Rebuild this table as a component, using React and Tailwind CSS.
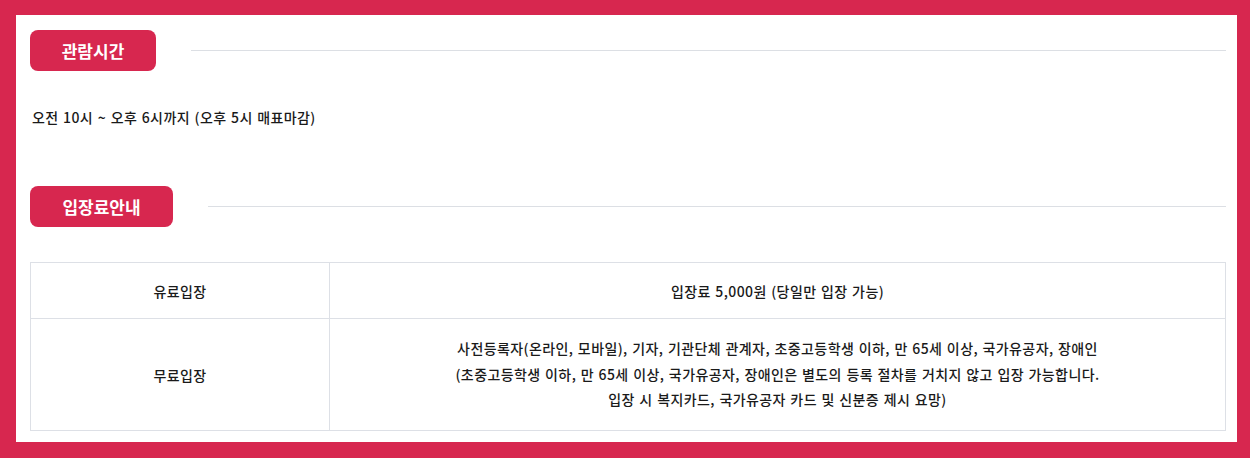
export default function App() {
  const font = { fontFamily: '"Noto Sans CJK KR", "Noto Sans", sans-serif' }
  return (
    <div className="bg-[#d7274f] pt-[15px] pl-4 pr-[13px] pb-4" style={font}>
      <div className="bg-white pt-[15px] pl-[14px] pr-[11px] pb-[10px] h-[427px]">
        {/* 관람시간 */}
        <div className="flex items-center">
          <div className="w-[126px] h-[41px] rounded-lg bg-[#d7274f] text-white text-[17px] font-bold flex items-center justify-center">
            관람시간
          </div>
          <div className="flex-1 ml-[35px] h-px bg-[#dcdfe4]" />
        </div>
        <p className="mt-[36px] ml-[2px] text-sm font-medium text-[#1a1a1a] leading-5 tracking-[0.4px] [word-spacing:1px]">
          오전 10시 ~ 오후 6시까지 (오후 5시 매표마감)
        </p>

        {/* 입장료안내 */}
        <div className="flex items-center mt-[59px]">
          <div className="w-[143px] h-[41px] rounded-lg bg-[#d7274f] text-white text-[17px] font-bold flex items-center justify-center">
            입장료안내
          </div>
          <div className="flex-1 ml-[35px] h-px bg-[#dcdfe4]" />
        </div>

        <table className="mt-[35px] w-full border-collapse text-sm font-medium text-[#1a1a1a] tracking-[0.4px] [word-spacing:1px]">
          <tbody>
            <tr className="h-[56px]">
              <td className="w-[299px] border border-[#dde0e6] text-center">유료입장</td>
              <td className="border border-[#dde0e6] text-center">입장료 5,000원 (당일만 입장 가능)</td>
            </tr>
            <tr className="h-[112px]">
              <td className="border border-[#dde0e6] text-center">무료입장</td>
              <td className="border border-[#dde0e6] text-center leading-[25.5px]">
                사전등록자(온라인, 모바일), 기자, 기관단체 관계자, 초중고등학생 이하, 만 65세 이상, 국가유공자, 장애인
                <br />
                (초중고등학생 이하, 만 65세 이상, 국가유공자, 장애인은 별도의 등록 절차를 거치지 않고 입장 가능합니다.
                <br />
                입장 시 복지카드, 국가유공자 카드 및 신분증 제시 요망)
              </td>
            </tr>
          </tbody>
        </table>
      </div>
    </div>
  )
}
